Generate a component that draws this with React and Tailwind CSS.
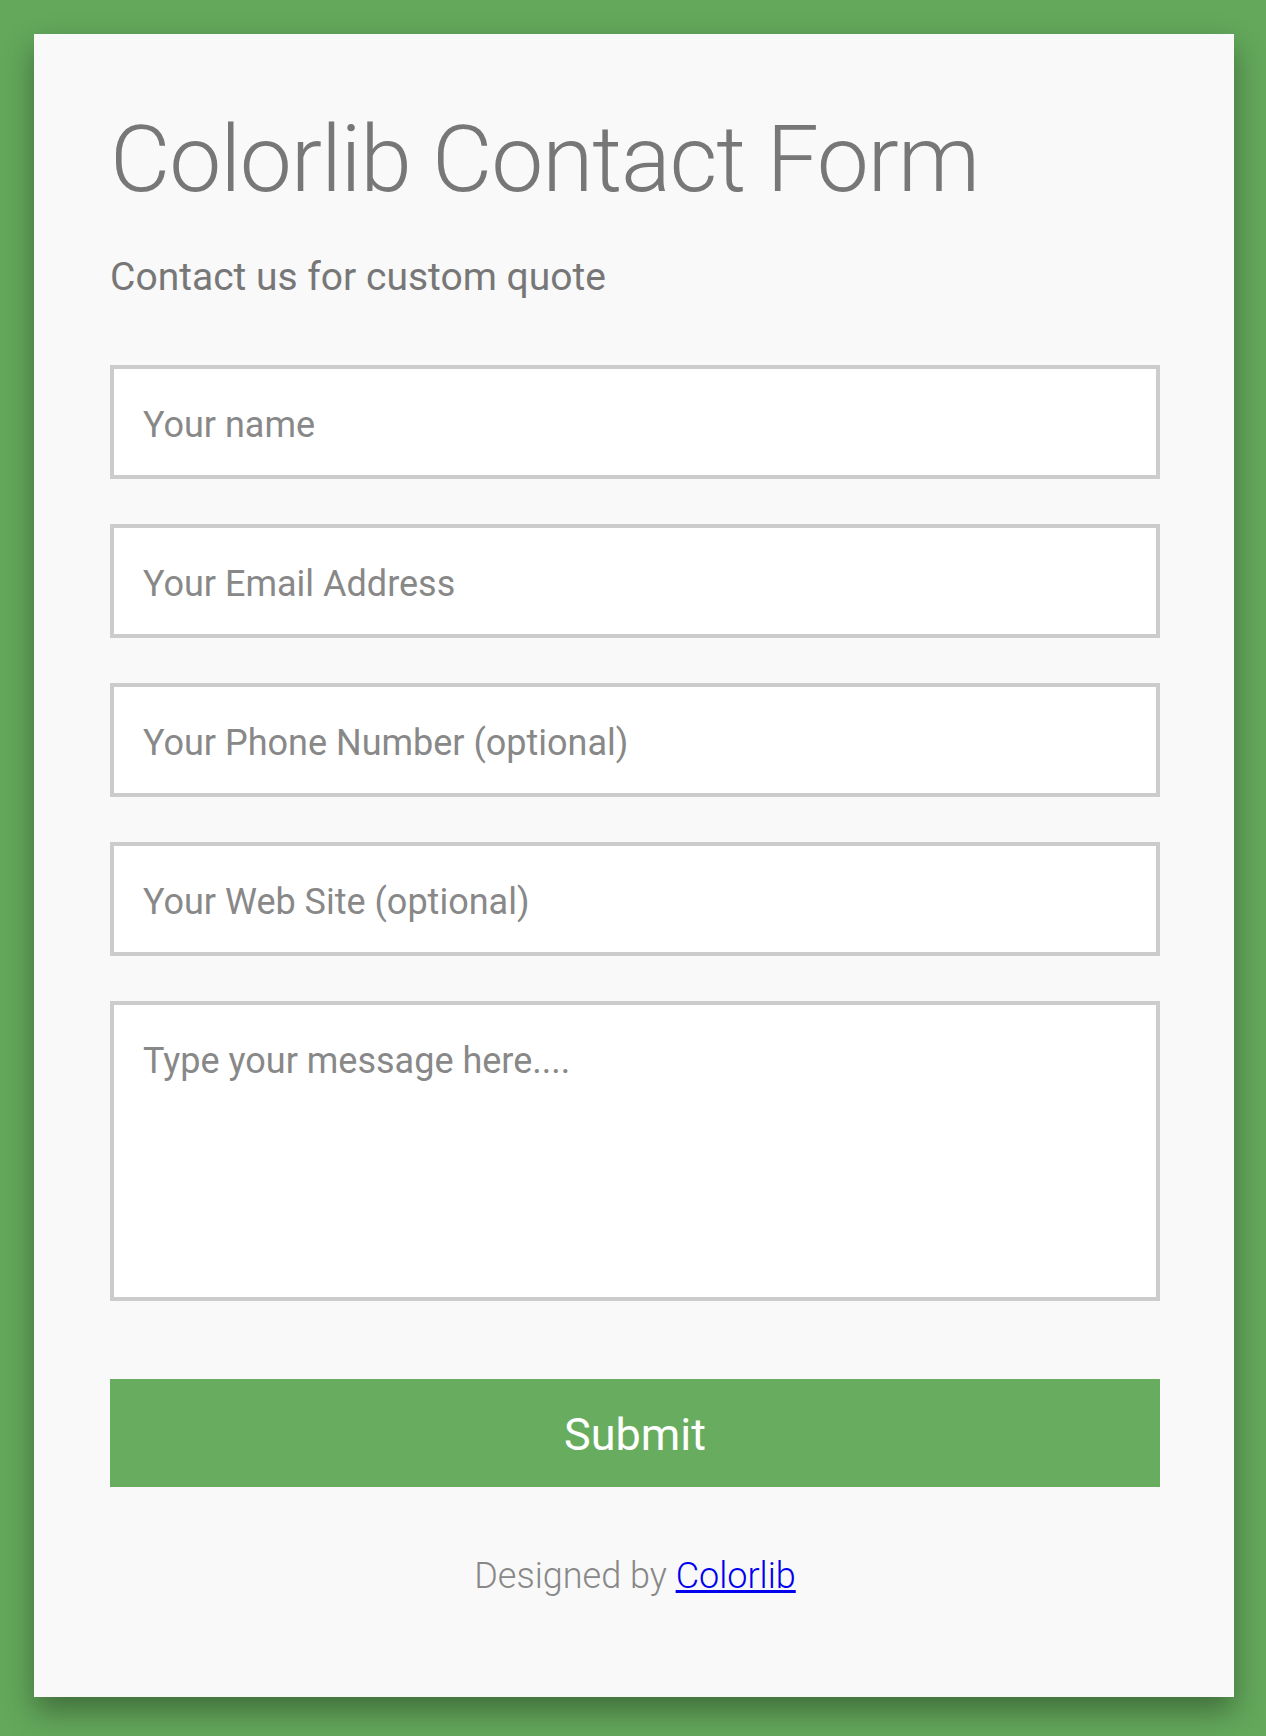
import React from "react";

const fields = [
  { type: "text", placeholder: "Your name" },
  { type: "email", placeholder: "Your Email Address" },
  { type: "tel", placeholder: "Your Phone Number (optional)" },
  { type: "url", placeholder: "Your Web Site (optional)" },
];

const inputClass =
  "block w-full bg-white border-4 border-[#cccccc] px-[29px] text-[36px] text-[#777] placeholder:text-[#888888] outline-none font-['Roboto',sans-serif]";

export default function App() {
  return (
    <div className="min-h-screen w-full bg-[#63a85b] pt-[34px] pb-[40px] font-['Roboto',sans-serif]">
      <div className="ml-[34px] w-[1200px] bg-[#f9f9f9] pt-[79px] pb-[103px] pl-[76px] pr-[74px] shadow-[0_14px_28px_rgba(0,0,0,0.35)]">
        <h1 className="text-[93px] leading-none font-light tracking-[-1.2px] text-[#777777]">
          Colorlib Contact Form
        </h1>
        <p className="mt-[52px] text-[39px] leading-none font-normal text-[#777777]">
          Contact us for custom quote
        </p>

        <form className="mt-[68px] flex flex-col" onSubmit={(e) => e.preventDefault()}>
          <div className="flex flex-col gap-[45px]">
            {fields.map((f) => (
              <input
                key={f.placeholder}
                type={f.type}
                placeholder={f.placeholder}
                className={`${inputClass} h-[114px] pt-[6px] pb-0 leading-normal`}
              />
            ))}
            <textarea
              placeholder="Type your message here...."
              className={`${inputClass} h-[300px] pt-[29px] leading-normal resize-none`}
            />
          </div>

          <button
            type="submit"
            className="mt-[78px] h-[108px] w-full bg-[#68ad5f] pt-[4px] text-white text-[45px] font-normal"
          >
            Submit
          </button>
        </form>

        <p className="mt-[71px] text-center text-[36px] leading-none font-light text-[#888888]">
          Designed by{" "}
          <a href="#" className="text-[#0000ee] underline">
            Colorlib
          </a>
        </p>
      </div>
    </div>
  );
}
